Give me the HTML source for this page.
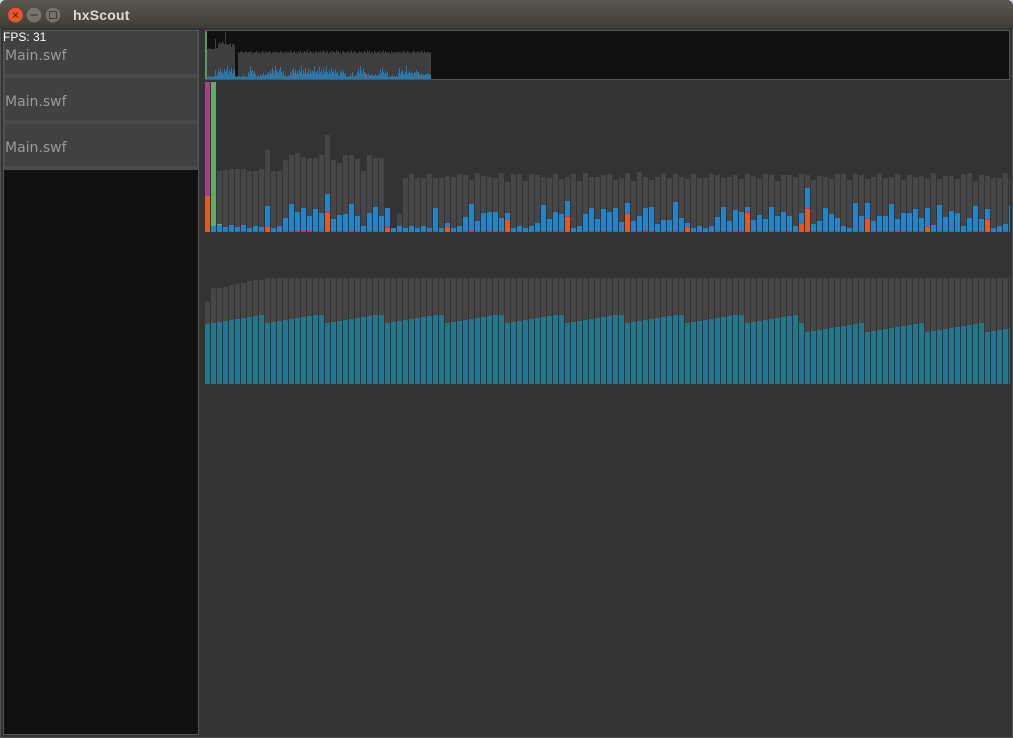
<!DOCTYPE html>
<html>
<head>
<meta charset="utf-8">
<title>hxScout</title>
<style>
html,body{margin:0;padding:0;width:1013px;height:738px;overflow:hidden;background:#d8d8d8}
#win{position:absolute;left:0;top:0;width:1013px;height:738px;background:#333;border-radius:6px 6px 0 0;overflow:hidden}
#tb{position:absolute;left:0;top:0;width:1013px;height:28px;background:linear-gradient(#5a5750 0,#514e46 35%,#45433e 80%,#3c3b37 100%)}
#tt{position:absolute;left:73px;top:6px;font:bold 14px/18px "Liberation Sans",sans-serif;letter-spacing:.2px;color:#dfdbd2}
.edge{position:absolute;background:#525252}
#panel{position:absolute;left:3px;top:30px;width:196px;height:705px;box-sizing:border-box;border:1px solid #555;background:#111}
.item{position:absolute;left:0;width:194px;height:47px;box-sizing:border-box;background:#414141;border-bottom:4px solid #4b4b4b;border-left:1px solid #4b4b4b;border-right:1px solid #4b4b4b;color:#999;font:14px/18px "DejaVu Sans",sans-serif}
.item span{position:absolute;left:0;top:15px}
#fps{position:absolute;left:3px;top:30px;font:12px/14px "Liberation Sans",sans-serif;color:#fff}
svg{position:absolute;left:0;top:0}
</style>
</head>
<body>
<div id="win">
<div id="tb"></div>
<div id="tt">hxScout</div>
<div class="edge" style="left:0;top:28px;width:1px;height:710px"></div>
<div class="edge" style="left:1012px;top:28px;width:1px;height:710px"></div>
<div class="edge" style="left:0;top:737px;width:1013px;height:1px"></div>
<div id="panel">
<div class="item" style="top:0"><span style="top:16px">Main.swf</span></div>
<div class="item" style="top:47px;height:46px"><span>Main.swf</span></div>
<div class="item" style="top:93px;height:46px"><span>Main.swf</span></div>
</div>
<div id="fps">FPS: 31</div>
<svg width="70" height="28" viewBox="0 0 70 28">
<circle cx="15.5" cy="15" r="7.8" fill="#e5572b" stroke="#3a3835" stroke-opacity=".5"/>
<path d="M13 12.5l5 5M18 12.5l-5 5" stroke="#5a2a18" stroke-width="1.1"/>
<circle cx="34" cy="15" r="7.8" fill="#75736c" stroke="#3a3835" stroke-opacity=".5"/>
<path d="M30.5 15h7" stroke="#3f3d39" stroke-width="1.2"/>
<circle cx="53" cy="15" r="7.8" fill="#75736c" stroke="#3a3835" stroke-opacity=".5"/>
<rect x="49.5" y="11.5" width="7" height="7" fill="none" stroke="#3f3d39" stroke-width="1.1"/>
</svg>
<svg width="1010" height="738" viewBox="0 0 1010 738" shape-rendering="crispEdges">
<!-- overview -->
<rect x="205" y="30" width="805" height="50" fill="#555"/>
<rect x="207" y="31" width="802" height="48" fill="#111"/>
<path fill="#3e3e3e" d="M207 79V49h1V49h1V48h1V49h1V49h1V49h1V49h1V49h1V39h1V48h1V48h1V44h1V42h1V44h1V43h1V41h1V43h1V44h1V32h1V44h1V44h1V45h1V44h1V43h1V47h1V44h1V44h1V45h1V79z"/>
<path fill="#3e3e3e" d="M238 79V52h1V53h1V52h1V51h1V52h1V53h1V52h1V52h1V51h1V53h1V52h1V52h1V51h1V52h1V54h1V52h1V53h1V52h1V51h1V52h1V53h1V52h1V54h1V52h1V51h1V52h1V53h1V51h1V52h1V53h1V52h1V51h1V52h1V54h1V52h1V52h1V53h1V51h1V52h1V53h1V52h1V53h1V51h1V52h1V52h1V54h1V52h1V51h1V53h1V52h1V52h1V53h1V50h1V52h1V53h1V52h1V51h1V53h1V52h1V54h1V52h1V52h1V51h1V53h1V52h1V53h1V51h1V52h1V52h1V50h1V53h1V52h1V51h1V52h1V53h1V52h1V54h1V52h1V51h1V53h1V52h1V52h1V51h1V53h1V52h1V50h1V52h1V53h1V52h1V51h1V54h1V52h1V52h1V53h1V51h1V52h1V52h1V53h1V50h1V52h1V51h1V53h1V52h1V54h1V52h1V51h1V52h1V53h1V52h1V52h1V51h1V53h1V52h1V50h1V53h1V52h1V51h1V52h1V54h1V52h1V53h1V51h1V52h1V52h1V53h1V52h1V51h1V52h1V53h1V50h1V52h1V51h1V53h1V52h1V52h1V54h1V51h1V52h1V53h1V52h1V52h1V51h1V53h1V52h1V52h1V50h1V53h1V51h1V52h1V52h1V53h1V52h1V54h1V51h1V52h1V53h1V52h1V52h1V79z"/>
<path fill="#3e3e3e" d="M396 79V52h1V53h1V51h1V52h1V52h1V53h1V52h1V50h1V52h1V53h1V52h1V51h1V52h1V53h1V52h1V54h1V52h1V51h1V52h1V53h1V52h1V52h1V51h1V53h1V52h1V50h1V52h1V53h1V51h1V52h1V53h1V52h1V52h1V53h1V52h1V79z"/>
<path fill="#2777ad" d="M217 79V74h18V79zM248 79V74h8V79zM268 79V74h16V79zM290 79V74h48V79zM340 79V74h6V79zM357 79V74h9V79zM380 79V74h8V79zM398 79V75h30V79zM207 79V77h224V79z"/>
<path fill="#2777ad" d="M207 79V77h1V76h1V77h1V77h1V76h1V77h1V77h1V76h1V70h1V76h1V77h1V70h1V72h1V68h1V73h1V71h1V74h1V69h1V72h1V70h1V66h1V74h1V70h1V72h1V68h1V74h1V71h1V69h1V76h1V77h1V76h1V77h1V76h1V77h1V76h1V77h1V74h1V76h1V77h1V76h1V77h1V72h1V74h1V66h1V71h1V70h1V73h1V71h1V74h1V77h1V76h1V75h1V77h1V74h1V76h1V75h1V73h1V76h1V74h1V75h1V74h1V72h1V74h1V70h1V73h1V68h1V71h1V74h1V66h1V70h1V72h1V73h1V70h1V67h1V72h1V74h1V71h1V76h1V75h1V77h1V76h1V75h1V76h1V72h1V74h1V70h1V68h1V73h1V70h1V75h1V71h1V74h1V69h1V72h1V66h1V74h1V70h1V73h1V71h1V75h1V72h1V68h1V74h1V70h1V73h1V71h1V71h1V66h1V73h1V72h1V70h1V74h1V67h1V72h1V70h1V74h1V68h1V73h1V71h1V66h1V72h1V74h1V70h1V73h1V67h1V72h1V71h1V74h1V69h1V73h1V72h1V75h1V76h1V71h1V73h1V70h1V72h1V74h1V73h1V77h1V76h1V77h1V76h1V74h1V77h1V72h1V76h1V77h1V75h1V76h1V72h1V69h1V73h1V66h1V71h1V74h1V68h1V72h1V73h1V74h1V75h1V73h1V76h1V75h1V74h1V75h1V76h1V75h1V74h1V76h1V75h1V74h1V75h1V70h1V73h1V68h1V72h1V74h1V71h1V75h1V72h1V77h1V76h1V77h1V76h1V75h1V77h1V76h1V77h1V76h1V77h1V73h1V68h1V74h1V72h1V70h1V73h1V75h1V72h1V66h1V74h1V73h1V71h1V74h1V72h1V73h1V75h1V72h1V73h1V70h1V72h1V72h1V74h1V75h1V73h1V75h1V74h1V75h1V74h1V75h1V73h1V74h1V75h1V74h1V79z"/>
<path fill="#b0552f" d="M275 70h1v5h-1zM295 70h1v6h-1zM305 68h1v5h-1zM365 73h1v5h-1zM418 74h1v4h-1z"/>
<rect x="205" y="30" width="2" height="49" fill="#5a9a5e"/>
<rect x="205" y="30" width="2" height="2" fill="#8c4a80"/>
<!-- top chart -->
<rect x="205" y="82" width="5" height="114" fill="#a63f8a"/>
<rect x="205" y="196" width="5" height="36" fill="#e05a24"/>
<rect x="211" y="82" width="5" height="144" fill="#64a964"/>
<path fill="#464646" d="M217 232V171h5V232h1V170h5V232h1V169h5V232h1V169h5V232h1V169h5V232h1V171h5V232h1V171h5V232h1V169h5V232h1V150h5V232h1V171h5V232h1V171h5V232h1V160h5V232h1V155h5V232h1V153h5V232h1V157h5V232h1V158h5V232h1V158h5V232h1V155h5V232h1V135h5V232h1V160h5V232h1V163h5V232h1V155h5V232h1V155h5V232h1V159h5V232h1V171h5V232h1V155h5V232h1V158h5V232h1V158h5V232h1h6h6V214h5V232h1V178h5V232h1V174h5V232h1V178h5V232h1V178h5V232h1V174h5V232h1V178h5V232h1V178h5V232h1V176h5V232h1V177h5V232h1V174h5V232h1V175h5V232h1V180h5V232h1V173h5V232h1V176h5V232h1V177h5V232h1V178h5V232h1V173h5V232h1V182h5V232h1V174h5V232h1V174h5V232h1V181h5V232h1V174h5V232h1V175h5V232h1V177h5V232h1V178h5V232h1V174h5V232h1V179h5V232h1V177h5V232h1V174h5V232h1V181h5V232h1V173h5V232h1V177h5V232h1V177h5V232h1V175h5V232h1V174h5V232h1V180h5V232h1V178h5V232h1V173h5V232h1V181h5V232h1V172h5V232h1V177h5V232h1V180h5V232h1V177h5V232h1V173h5V232h1V178h5V232h1V174h5V232h1V177h5V232h1V179h5V232h1V174h5V232h1V178h5V232h1V178h5V232h1V174h5V232h1V175h5V232h1V178h5V232h1V177h5V232h1V175h5V232h1V179h5V232h1V174h5V232h1V176h5V232h1V179h5V232h1V174h5V232h1V175h5V232h1V181h5V232h1V175h5V232h1V175h5V232h1V177h5V232h1V174h5V232h1V175h5V232h1V180h5V232h1V176h5V232h1V177h5V232h1V179h5V232h1V174h5V232h1V174h5V232h1V180h5V232h1V174h5V232h1V175h5V232h1V179h5V232h1V177h5V232h1V173h5V232h1V178h5V232h1V177h5V232h1V174h5V232h1V180h5V232h1V175h5V232h1V177h5V232h1V176h5V232h1V179h5V232h1V173h5V232h1V179h5V232h1V176h5V232h1V176h5V232h1V179h5V232h1V174h5V232h1V173h5V232h1V181h5V232h1V175h5V232h1V176h5V232h1V178h5V232h1V178h5V232h1V173h5V232h1V179h5V232z"/>
<path fill="#2385c8" d="M211 232V226h5V232h1V225h5V232h1V227h5V232h1V225h5V232h1V227h5V232h1V225h5V232h1V228h5V232h1V226h5V232h1V227h5V232h1V206h5V232h1V228h5V232h1V226h5V232h1V218h5V232h1V204h5V232h1V212h5V232h1V208h5V232h1V216h5V232h1V209h5V232h1V213h5V232h1V194h5V232h1V219h5V232h1V215h5V232h1V214h5V232h1V204h5V232h1V216h5V232h1V226h5V232h1V213h5V232h1V207h5V232h1V216h5V232h1V208h5V232h1V228h5V232h1V226h5V232h1V228h5V232h1V226h5V232h1V228h5V232h1V226h5V232h1V228h5V232h1V208h5V232h1V228h5V232h1V223h5V232h1V228h5V232h1V226h5V232h1V217h5V232h1V204h5V232h1V221h5V232h1V213h5V232h1V212h5V232h1V212h5V232h1V218h5V232h1V213h5V232h1V228h5V232h1V226h5V232h1V228h5V232h1V226h5V232h1V223h5V232h1V205h5V232h1V219h5V232h1V212h5V232h1V214h5V232h1V201h5V232h1V228h5V232h1V226h5V232h1V214h5V232h1V208h5V232h1V219h5V232h1V209h5V232h1V212h5V232h1V208h5V232h1V222h5V232h1V203h5V232h1V221h5V232h1V216h5V232h1V208h5V232h1V207h5V232h1V224h5V232h1V220h5V232h1V220h5V232h1V202h5V232h1V218h5V232h1V223h5V232h1V228h5V232h1V226h5V232h1V228h5V232h1V226h5V232h1V217h5V232h1V207h5V232h1V221h5V232h1V210h5V232h1V212h5V232h1V207h5V232h1V220h5V232h1V215h5V232h1V219h5V232h1V207h5V232h1V216h5V232h1V212h5V232h1V216h5V232h1V226h5V232h1V213h5V232h1V188h5V232h1V224h5V232h1V221h5V232h1V208h5V232h1V214h5V232h1V218h5V232h1V226h5V232h1V228h5V232h1V203h5V232h1V216h5V232h1V203h5V232h1V221h5V232h1V216h5V232h1V216h5V232h1V204h5V232h1V219h5V232h1V213h5V232h1V213h5V232h1V209h5V232h1V218h5V232h1V208h5V232h1V225h5V232h1V205h5V232h1V217h5V232h1V211h5V232h1V213h5V232h1V226h5V232h1V218h5V232h1V206h5V232h1V219h5V232h1V209h5V232h1V228h5V232h1V226h5V232h1V224h5V232h1V205h5V232z"/>
<path fill="#64a964" d="M217 224h5v1h-5z"/>
<path fill="#a63f8a" d="M223 231h5v1h-5zM229 231h5v1h-5zM235 231h5v1h-5zM241 231h5v1h-5zM259 231h5v1h-5zM283 231h5v1h-5zM289 231h5v1h-5zM295 230h5v2h-5zM301 230h5v2h-5zM307 230h5v2h-5zM313 231h5v1h-5zM319 231h5v1h-5zM331 231h5v1h-5zM337 231h5v1h-5zM343 231h5v1h-5zM349 230h5v2h-5zM355 231h5v1h-5zM367 231h5v1h-5zM373 231h5v1h-5zM379 231h5v1h-5zM427 231h5v1h-5zM433 231h5v1h-5zM463 231h5v1h-5zM469 230h5v2h-5zM475 231h5v1h-5zM481 231h5v1h-5zM487 230h5v2h-5zM493 231h5v1h-5zM499 231h5v1h-5zM535 231h5v1h-5zM541 231h5v1h-5zM547 231h5v1h-5zM553 231h5v1h-5zM559 231h5v1h-5zM583 231h5v1h-5zM589 231h5v1h-5zM595 231h5v1h-5zM601 231h5v1h-5zM607 231h5v1h-5zM613 231h5v1h-5zM619 231h5v1h-5zM631 231h5v1h-5zM637 231h5v1h-5zM643 230h5v2h-5zM649 231h5v1h-5zM661 231h5v1h-5zM667 231h5v1h-5zM673 230h5v2h-5zM679 231h5v1h-5zM715 231h5v1h-5zM721 231h5v1h-5zM727 231h5v1h-5zM733 230h5v2h-5zM739 231h5v1h-5zM751 231h5v1h-5zM757 231h5v1h-5zM763 231h5v1h-5zM769 231h5v1h-5zM775 231h5v1h-5zM781 231h5v1h-5zM787 231h5v1h-5zM811 231h5v1h-5zM817 231h5v1h-5zM823 231h5v1h-5zM829 231h5v1h-5zM835 231h5v1h-5zM847 231h5v1h-5zM853 231h5v1h-5zM859 231h5v1h-5zM871 231h5v1h-5zM877 231h5v1h-5zM883 231h5v1h-5zM889 231h5v1h-5zM895 230h5v2h-5zM901 231h5v1h-5zM907 231h5v1h-5zM913 231h5v1h-5zM919 231h5v1h-5zM931 231h5v1h-5zM937 231h5v1h-5zM943 231h5v1h-5zM949 231h5v1h-5zM955 231h5v1h-5zM967 231h5v1h-5zM973 231h5v1h-5zM979 231h5v1h-5zM1003 231h5v1h-5z"/>
<path fill="#a63f8a" d="M265 226h5v1h-5zM325 211h5v2h-5zM385 226h5v2h-5zM565 216h5v1h-5zM625 213h5v1h-5zM745 211h5v2h-5zM799 223h5v1h-5zM805 207h5v2h-5zM865 218h5v1h-5zM925 226h5v1h-5zM985 219h5v1h-5z"/>
<path fill="#e05a24" d="M265 227h5v5h-5zM325 213h5v19h-5zM385 228h5v4h-5zM445 227h5v5h-5zM505 220h5v12h-5zM565 217h5v15h-5zM625 214h5v18h-5zM685 227h5v5h-5zM745 213h5v19h-5zM799 224h5v8h-5zM805 209h5v23h-5zM865 219h5v13h-5zM925 227h5v5h-5zM985 220h5v12h-5z"/>
<!-- bottom chart -->
<path fill="#464646" d="M205 384V302h5V384h1V288h5V384h1V288h5V384h1V287h5V384h1V285h5V384h1V284h5V384h1V283h5V384h1V281h5V384h1V280h5V384h1V280h5V384z"/>
<path d="M265 331H1010" stroke="#464646" stroke-width="106" stroke-dasharray="5 1" fill="none"/>
<path fill="#26778c" d="M205 384V324h5V384h1V323h5V384h1V322h5V384h1V321h5V384h1V320h5V384h1V319h5V384h1V318h5V384h1V317h5V384h1V316h5V384h1V315h5V384h1
V323h5V384h1V322h5V384h1V321h5V384h1V320h5V384h1V319h5V384h1V318h5V384h1V317h5V384h1V316h5V384h1V315h5V384h1V315h5V384h1
V323h5V384h1V322h5V384h1V321h5V384h1V320h5V384h1V319h5V384h1V318h5V384h1V317h5V384h1V316h5V384h1V315h5V384h1V315h5V384h1
V323h5V384h1V322h5V384h1V321h5V384h1V320h5V384h1V319h5V384h1V318h5V384h1V317h5V384h1V316h5V384h1V315h5V384h1V315h5V384h1
V323h5V384h1V322h5V384h1V321h5V384h1V320h5V384h1V319h5V384h1V318h5V384h1V317h5V384h1V316h5V384h1V315h5V384h1V315h5V384h1
V323h5V384h1V322h5V384h1V321h5V384h1V320h5V384h1V319h5V384h1V318h5V384h1V317h5V384h1V316h5V384h1V315h5V384h1V315h5V384h1
V323h5V384h1V322h5V384h1V321h5V384h1V320h5V384h1V319h5V384h1V318h5V384h1V317h5V384h1V316h5V384h1V315h5V384h1V315h5V384h1
V323h5V384h1V322h5V384h1V321h5V384h1V320h5V384h1V319h5V384h1V318h5V384h1V317h5V384h1V316h5V384h1V315h5V384h1V315h5V384h1
V323h5V384h1V322h5V384h1V321h5V384h1V320h5V384h1V319h5V384h1V318h5V384h1V317h5V384h1V316h5V384h1V315h5V384h1V315h5V384h1
V323h5V384h1V322h5V384h1V321h5V384h1V320h5V384h1V319h5V384h1V318h5V384h1V317h5V384h1V316h5V384h1V315h5V384h1V323h5V384h1
V332h5V384h1V331h5V384h1V330h5V384h1V329h5V384h1V328h5V384h1V327h5V384h1V326h5V384h1V325h5V384h1V324h5V384h1V323h5V384h1
V332h5V384h1V331h5V384h1V330h5V384h1V329h5V384h1V328h5V384h1V327h5V384h1V326h5V384h1V325h5V384h1V324h5V384h1V323h5V384h1
V332h5V384h1V331h5V384h1V330h5V384h1V329h5V384h1V328h5V384h1V327h5V384h1V326h5V384h1V325h5V384h1V324h5V384h1V323h5V384h1
V332h5V384h1V331h5V384h1V330h5V384h1V329h5V384h1V328h5V384z"/>
</svg>
</div>
</body>
</html>
